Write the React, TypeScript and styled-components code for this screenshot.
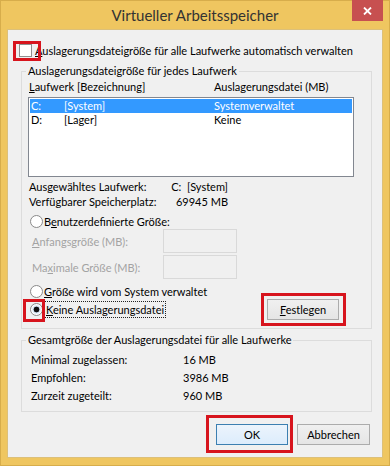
import React from 'react';
import styled, { createGlobalStyle, css } from 'styled-components';

const GlobalStyle = createGlobalStyle`
  html, body {
    margin: 0;
    padding: 0;
  }
  body {
    font-family: Lato, "Liberation Sans", sans-serif;
    font-size: 11px;
    color: #000;
    white-space: nowrap;
  }
`;

const Window = styled.div`
  width: 390px;
  height: 466px;
  box-sizing: border-box;
  background: #efc660;
  box-shadow: inset 0 0 0 1px #d7ad4b;
  display: flex;
  flex-direction: column;
`;

const TitleBar = styled.div`
  height: 30px;
  flex: none;
  display: grid;
  grid-template-columns: 1fr auto 1fr;
`;

const Title = styled.div`
  grid-column: 2;
  line-height: 31px;
  font-size: 15px;
  color: #333;
`;

const CloseButton = styled.div`
  grid-column: 3;
  justify-self: end;
  width: 31px;
  height: 21px;
  margin-right: 7px;
  background: #c75050;
  display: flex;
  align-items: center;
  justify-content: center;
`;

const Client = styled.div`
  flex: 1;
  margin: 0 8px 9px;
  background: #f0f0f0;
  box-shadow: 0 0 0 1px #dcc07a;
  display: flex;
  flex-direction: column;
`;

const Highlight = styled.span<{ $t: number; $r: number; $b: number; $l: number }>`
  position: relative;
  display: inline-flex;
  &::after {
    content: '';
    position: absolute;
    top: ${(p) => -p.$t}px;
    right: ${(p) => -p.$r}px;
    bottom: ${(p) => -p.$b}px;
    left: ${(p) => -p.$l}px;
    border: 3px solid #d7141d;
    pointer-events: none;
  }
`;

const CheckRow = styled.div`
  margin-top: 10px;
  height: 20px;
  padding-left: 11px;
  display: flex;
  align-items: center;
  gap: 3px;
`;

const CheckBox = styled.span`
  width: 13px;
  height: 13px;
  box-sizing: border-box;
  border: 1px solid #8f8f8f;
  background: #fff;
`;

const Mn = styled.u`
  text-decoration: underline;
`;

const Group = styled.fieldset`
  margin: 3px 10px 0 13px;
  padding: 0;
  min-width: 0;
  border: 1px solid #dcdcdc;
`;

const Legend = styled.legend`
  margin-left: 4px;
  padding: 0 2px;
  line-height: 16px;
`;

const GroupBody = styled.div<{ $pad: string }>`
  padding: ${(p) => p.$pad};
  display: flex;
  flex-direction: column;
`;

const HeaderRow = styled.div`
  height: 16px;
  line-height: 16px;
  padding-left: 1px;
  display: grid;
  grid-template-columns: 185px 1fr;
`;

const ListBox = styled.div`
  margin-top: 2px;
  height: 80px;
  box-sizing: border-box;
  border: 1px solid #828790;
  background: #fff;
  padding: 1px;
`;

const ListRow = styled.div<{ $selected?: boolean }>`
  height: 14px;
  line-height: 14px;
  padding-left: 1px;
  display: grid;
  grid-template-columns: 33px 150px 1fr;
  ${(p) =>
    p.$selected &&
    css`
      background: #3399ff;
      color: #fff;
    `}
`;

const InfoGrid = styled.div`
  margin-top: 2px;
  padding-left: 1px;
  display: grid;
  grid-template-columns: 130px 69px;
  line-height: 15px;
  & > span:nth-child(2n) {
    text-align: right;
    white-space: pre;
  }
`;

const RadioRow = styled.div<{ $top?: number; $h?: number }>`
  margin-top: ${(p) => p.$top ?? 0}px;
  height: ${(p) => p.$h ?? 16}px;
  padding-left: 2px;
  display: flex;
  align-items: center;
  gap: 1px;
`;

const Radio = styled.span<{ $checked?: boolean }>`
  width: 13px;
  height: 13px;
  box-sizing: border-box;
  border-radius: 50%;
  border: 1px solid #8a8a8a;
  background: ${(p) =>
    p.$checked
      ? 'radial-gradient(circle, #111 0 2.6px, #cfe0f0 3.2px, #fff 5px)'
      : '#fff'};
`;

const FieldRows = styled.div`
  display: flex;
  flex-direction: column;
  gap: 2px;
`;

const FieldRow = styled.div`
  height: 24px;
  padding-left: 4px;
  display: grid;
  grid-template-columns: 131px 74px;
  align-items: center;
  color: #a3a3a3;
`;

const DisabledInput = styled.span`
  height: 24px;
  box-sizing: border-box;
  border: 1px solid #d9d9d9;
  background: #f0f0f0;
`;

const SplitRow = styled.div`
  height: 21px;
  display: flex;
  align-items: center;
  justify-content: space-between;
`;

const FocusText = styled.span`
  border: 1px dotted #222;
  padding: 1px 1px 0;
  line-height: 14px;
`;

const Button = styled.button<{ $w: number; $default?: boolean }>`
  width: ${(p) => p.$w}px;
  height: 21px;
  padding: 0;
  font: inherit;
  color: #000;
  border: 1px solid #acacac;
  background: linear-gradient(#f0f0f0, #e5e5e5);
  ${(p) =>
    p.$default &&
    css`
      border-color: #3c7fb1;
      background: linear-gradient(#ecf4fc, #dcecfc);
    `}
`;

const TotalsGrid = styled.div`
  display: grid;
  grid-template-columns: 152px 1fr;
  grid-auto-rows: 18px;
  align-items: center;
`;

const ButtonRow = styled.div`
  margin-top: 12px;
  padding-right: 12px;
  display: flex;
  justify-content: flex-end;
  gap: 9px;
`;

function App() {
  return (
    <>
      <GlobalStyle />
      <Window>
        <TitleBar>
          <Title>Virtueller Arbeitsspeicher</Title>
          <CloseButton>
            <svg width="9" height="8" viewBox="0 0 9 8">
              <path d="M1 0.5 L8 7.5 M8 0.5 L1 7.5" stroke="#fff" strokeWidth="1.8" />
            </svg>
          </CloseButton>
        </TitleBar>
        <Client>
          <CheckRow>
            <Highlight $t={3} $r={9} $b={4} $l={6}>
              <CheckBox />
            </Highlight>
            <span>
              <Mn>A</Mn>uslagerungsdateigröße für alle Laufwerke automatisch verwalten
            </span>
          </CheckRow>

          <Group>
            <Legend>Auslagerungsdateigröße für jedes Laufwerk</Legend>
            <GroupBody $pad="0 17px 8px 6px">
              <HeaderRow>
                <span>
                  <Mn>L</Mn>aufwerk [Bezeichnung]
                </span>
                <span>Auslagerungsdatei (MB)</span>
              </HeaderRow>
              <ListBox>
                <ListRow $selected>
                  <span>C:</span>
                  <span>[System]</span>
                  <span>Systemverwaltet</span>
                </ListRow>
                <ListRow>
                  <span>D:</span>
                  <span>[Lager]</span>
                  <span>Keine</span>
                </ListRow>
              </ListBox>
              <InfoGrid>
                <span>Ausgewähltes Laufwerk:</span>
                <span>{'C:  [System]'}</span>
                <span>Verfügbarer Speicherplatz:</span>
                <span>69945 MB</span>
              </InfoGrid>
              <RadioRow $top={4}>
                <Radio />
                <span>
                  B<Mn>e</Mn>nutzerdefinierte Größe:
                </span>
              </RadioRow>
              <FieldRows>
                <FieldRow>
                  <span>
                    <Mn>A</Mn>nfangsgröße (MB):
                  </span>
                  <DisabledInput />
                </FieldRow>
                <FieldRow>
                  <span>
                    Ma<Mn>x</Mn>imale Größe (MB):
                  </span>
                  <DisabledInput />
                </FieldRow>
              </FieldRows>
              <RadioRow $top={4}>
                <Radio />
                <span>
                  <Mn>G</Mn>röße wird vom System verwaltet
                </span>
              </RadioRow>
              <SplitRow>
                <RadioRow $h={21}>
                  <Highlight $t={4} $r={2} $b={6} $l={7}>
                    <Radio $checked />
                  </Highlight>
                  <FocusText>
                    <Mn>K</Mn>eine Auslagerungsdatei
                  </FocusText>
                </RadioRow>
                <Highlight $t={6} $r={7} $b={6} $l={6} style={{ marginRight: 15 }}>
                  <Button $w={72}>
                    <Mn>F</Mn>estlegen
                  </Button>
                </Highlight>
              </SplitRow>
            </GroupBody>
          </Group>

          <Group>
            <Legend>Gesamtgröße der Auslagerungsdatei für alle Laufwerke</Legend>
            <GroupBody $pad="2px 0 7px 9px">
              <TotalsGrid>
                <span>Minimal zugelassen:</span>
                <span>16 MB</span>
                <span>Empfohlen:</span>
                <span>3986 MB</span>
                <span>Zurzeit zugeteilt:</span>
                <span>960 MB</span>
              </TotalsGrid>
            </GroupBody>
          </Group>

          <ButtonRow>
            <Highlight $t={9} $r={5} $b={8} $l={10}>
              <Button $w={72} $default>
                OK
              </Button>
            </Highlight>
            <Button $w={73}>Abbrechen</Button>
          </ButtonRow>
        </Client>
      </Window>
    </>
  );
}

export default App;
